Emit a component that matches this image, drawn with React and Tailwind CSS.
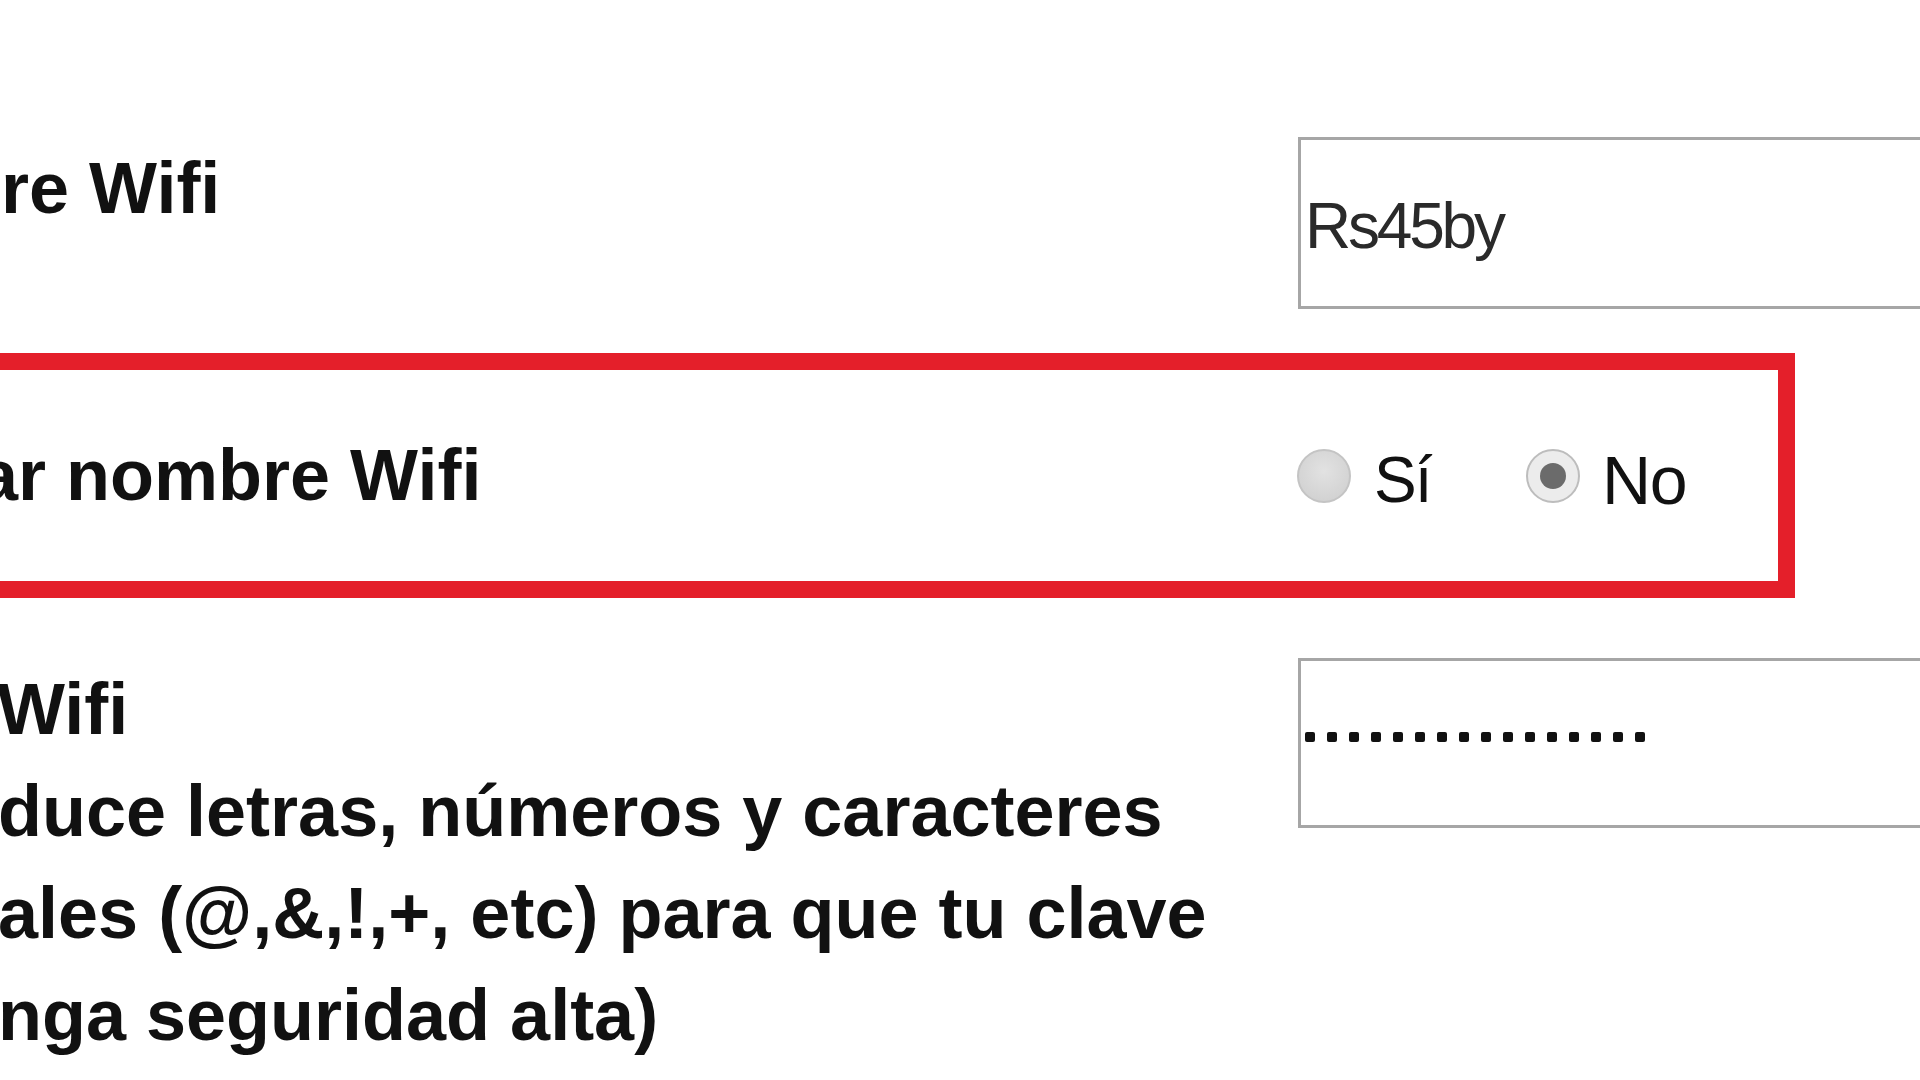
export default function App() {
  const dots = Array.from({ length: 16 });
  return (
    <div className="w-[1920px] h-[1080px] overflow-hidden bg-white text-[#111] font-['Liberation_Sans',Arial,sans-serif]">
      {/* Row 1 */}
      <div className="flex items-start pt-[137px]">
        <div className="w-[1298px] shrink-0">
          <div className="ml-[1px] text-[72px] leading-[102px] font-bold whitespace-nowrap">re Wifi</div>
        </div>
        <div className="w-[700px] h-[172px] shrink-0 border-[3px] border-[#a6a6a6] flex items-center pl-[4px] pt-[6px] text-[64px] leading-none tracking-[-0.05em] text-[#2a2a2a]">
          Rs45by
        </div>
      </div>

      {/* Row 2 - highlighted */}
      <div className="mt-[44px] -ml-[20px] w-[1815px] h-[245px] border-[17px] border-[#e41f2a] flex items-start">
        <div className="w-[1300px] shrink-0 pt-[54px]">
          <div className="-ml-[19px] text-[72px] leading-[102px] font-bold whitespace-nowrap">ar nombre Wifi</div>
        </div>
        <div className="flex items-center h-full">
          <div className="w-[54px] h-[54px] rounded-full border-2 border-[#c4c4c4] bg-[radial-gradient(circle_at_50%_40%,#e2e2e2,#cdcdcd)] shrink-0" />
          <div className="ml-[23px] w-[152px] shrink-0 text-[64px] leading-none tracking-[-0.03em] pt-[8px]">Sí</div>
          <div className="w-[54px] h-[54px] rounded-full border-2 border-[#bdbdbd] bg-[#ececec] flex items-center justify-center shrink-0">
            <div className="w-[26px] h-[26px] rounded-full bg-[#6b6b6b]" />
          </div>
          <div className="ml-[22px] shrink-0 text-[68px] leading-none tracking-[-0.02em] pt-[8px]">No</div>
        </div>
      </div>

      {/* Row 3 */}
      <div className="flex items-start mt-[60px]">
        <div className="w-[1298px] shrink-0 text-[72px] leading-[102px] font-bold whitespace-nowrap">
          <div className="-ml-[3px]">Wifi</div>
          <div className="-ml-[2px]">duce letras, números y caracteres</div>
          <div className="-ml-[2px]">ales (@,&amp;,!,+, etc) para que tu clave</div>
          <div className="-ml-[2px]">nga seguridad alta)</div>
        </div>
        <div className="w-[700px] h-[170px] shrink-0 border-[3px] border-[#a6a6a6] flex items-start pt-[71px] pl-[4px] gap-[12px]">
          {dots.map((_, i) => (
            <div key={i} className="w-[10px] h-[10px] bg-[#111] rounded-[2px]" />
          ))}
        </div>
      </div>
    </div>
  );
}
